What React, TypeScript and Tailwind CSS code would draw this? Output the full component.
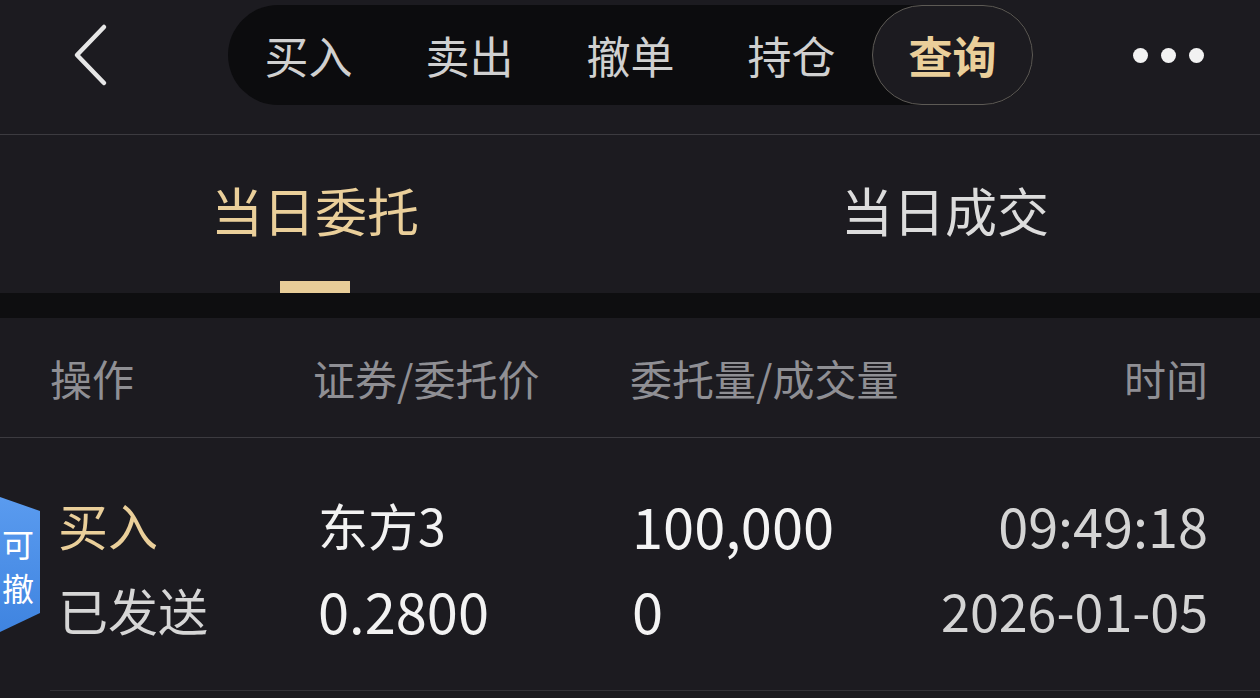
const font = { fontFamily: '"Noto Sans CJK SC", "Noto Sans", sans-serif' }

const tabs = ['买入', '卖出', '撤单', '持仓', '查询']

const App = () => {
    return (
        <div className="bg-[#1c1b20] w-[1260px] h-[698px] overflow-hidden text-[#d2d2d2]" style={font}>
            {/* top bar */}
            <div className="h-[135px] flex items-start border-b border-[#3c3b40]">
                <div className="w-[228px] h-[110px] flex items-center pl-[70px]">
                    <svg width="42" height="64" viewBox="0 0 42 64" fill="none">
                        <path d="M34 4 L7 32 L34 60" stroke="#e6e6e6" strokeWidth="4.5" strokeLinecap="round" strokeLinejoin="round" />
                    </svg>
                </div>
                <div className="mt-[5px] h-[100px] w-[805px] rounded-full bg-[#0c0c0e] flex">
                    {tabs.map((t, i) =>
                        i === 4 ? (
                            <div key={t} className="w-[161px] h-[100px] rounded-full border border-[#5d5a55] bg-[#1c1b20] flex items-center justify-center text-[44px] font-bold text-[#eacf9a]">
                                {t}
                            </div>
                        ) : (
                            <div key={t} className="w-[161px] h-[100px] flex items-center justify-center text-[44px] text-[#d0d0d0]">
                                {t}
                            </div>
                        )
                    )}
                </div>
                <div className="flex-1 h-[110px] flex items-center justify-end pr-[56px] gap-[13px]">
                    <span className="w-[15px] h-[15px] rounded-full bg-[#f2f2f2]"></span>
                    <span className="w-[15px] h-[15px] rounded-full bg-[#f2f2f2]"></span>
                    <span className="w-[15px] h-[15px] rounded-full bg-[#f2f2f2]"></span>
                </div>
            </div>

            {/* sub tabs */}
            <div className="h-[158px] flex">
                <div className="flex-1 flex flex-col items-center">
                    <div className="h-[146px] flex items-center pt-[4px] text-[52px] text-[#eacf9a]">当日委托</div>
                    <div className="w-[70px] h-[12px] bg-[#e8cd98]"></div>
                </div>
                <div className="flex-1 flex flex-col items-center">
                    <div className="h-[146px] flex items-center pt-[4px] text-[52px] text-[#dcdcdc]">当日成交</div>
                </div>
            </div>
            <div className="h-[25px] bg-[#0e0e10]"></div>

            {/* header row */}
            <div className="h-[120px] border-b border-[#3c3b40] flex items-center pl-[50px] pr-[52px] text-[42px] text-[#8f8f94]">
                <div className="w-[263px]">操作</div>
                <div className="w-[317px]">证券/委托价</div>
                <div className="flex-1">委托量/成交量</div>
                <div>时间</div>
            </div>

            {/* data row */}
            <div className="h-[253px] flex">
                <div className="w-[50px] flex items-start pt-[59px]">
                    <div className="relative w-[40px] h-[135px]">
                        <svg className="absolute inset-0" width="40" height="135" viewBox="0 0 40 135">
                            <defs>
                                <linearGradient id="bg" x1="0" y1="0" x2="0" y2="1">
                                    <stop offset="0" stopColor="#5a9bef" />
                                    <stop offset="1" stopColor="#3f84e0" />
                                </linearGradient>
                            </defs>
                            <path d="M0 0 L40 14 L40 116 L0 135 Z" fill="url(#bg)" />
                        </svg>
                        <div className="relative h-full flex flex-col items-center justify-center pr-[4px] text-[32px] leading-[44px] text-white">
                            <span>可</span>
                            <span>撤</span>
                        </div>
                    </div>
                </div>
                <div className="flex-1 flex flex-col border-b border-[#333238]">
                    <div className="flex pr-[52px] pt-[44px] h-[129px] items-center">
                        <div className="w-[268px] pl-[8px] text-[50px] text-[#eacf9a]">买入</div>
                        <div className="w-[314px] text-[50px] text-[#f2f2f2]">东方3</div>
                        <div className="flex-1 text-[56px] text-[#f4f4f4]">100,000</div>
                        <div className="text-[54px] text-[#d4d4d4]">09:49:18</div>
                    </div>
                    <div className="flex pr-[52px] h-[85px] items-center">
                        <div className="w-[268px] pl-[8px] text-[50px] text-[#d6d6d6]">已发送</div>
                        <div className="w-[314px] text-[56px] text-[#f2f2f2]">0.2800</div>
                        <div className="flex-1 text-[56px] text-[#f4f4f4]">0</div>
                        <div className="text-[52px] text-[#d4d4d4]">2026-01-05</div>
                    </div>
                </div>
            </div>
        </div>
    )
}

export default App
